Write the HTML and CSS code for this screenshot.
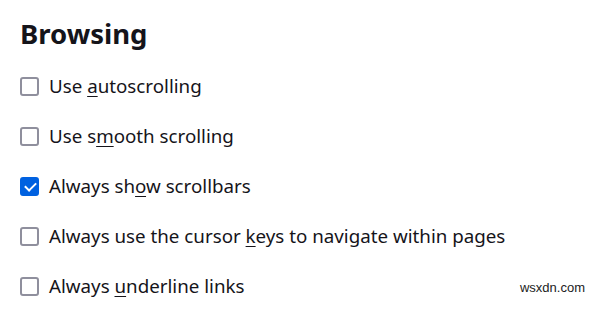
FILE: index.html
```html
<!DOCTYPE html>
<html lang="en">
<head>
    <meta charset="UTF-8">
    <meta name="viewport" content="width=device-width, initial-scale=1.0">
    <title>Browsing</title>
    <link rel="stylesheet" href="styles.css">
</head>
<body>
    <h1>Browsing</h1>

    <div class="options">
        <label class="option">
            <input type="checkbox">
            <span>Use <u>a</u>utoscrolling</span>
        </label>
        <label class="option">
            <input type="checkbox">
            <span>Use s<u>m</u>ooth scrolling</span>
        </label>
        <label class="option">
            <input type="checkbox" checked>
            <span>Always sh<u>o</u>w scrollbars</span>
        </label>
        <label class="option">
            <input type="checkbox">
            <span>Always use the cursor <u>k</u>eys to navigate within pages</span>
        </label>
        <label class="option">
            <input type="checkbox">
            <span>Always <u>u</u>nderline links</span>
        </label>
    </div>

    <div class="marca">wsxdn.com</div>
</body>
</html>
```

FILE: styles.css
```css
* {
    margin: 0;
    padding: 0;
    box-sizing: border-box;
}

body {
    background-color: #ffffff;
    color: #15141a;
    font-family: 'Noto Sans', sans-serif;
    padding: 17px 20px;
    height: 312px;
    position: relative;
    overflow: hidden;
}

h1 {
    font-size: 27.5px;
    font-weight: bold;
    line-height: 34px;
    margin-bottom: 21px;
}

.options {
    display: flex;
    flex-direction: column;
    gap: 22px;
}

.option {
    display: flex;
    align-items: center;
    gap: 10px;
    font-size: 18.75px;
    line-height: 28px;
}

.option u {
    text-underline-offset: 3px;
}

.option input {
    appearance: none;
    flex: none;
    width: 19px;
    height: 19px;
    border: 2px solid #8f8f9d;
    border-radius: 3px;
    background-color: #fff;
    position: relative;
}

.option input:checked {
    background-color: #0061e0;
    border-color: #0061e0;
}

.option input:checked::after {
    content: '';
    position: absolute;
    left: 5px;
    top: 1px;
    width: 5px;
    height: 9px;
    border: solid #fff;
    border-width: 0 2.5px 2.5px 0;
    transform: rotate(45deg);
}

.marca {
    position: absolute;
    right: 12px;
    bottom: 17px;
    font-family: 'Liberation Sans', Arial, sans-serif;
    font-size: 13px;
    color: #222;
}
```
